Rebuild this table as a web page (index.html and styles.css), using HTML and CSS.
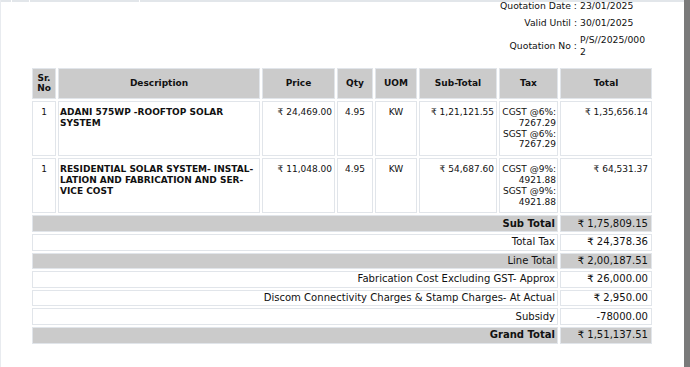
FILE: index.html
```html
<!DOCTYPE html>
<html lang="en">
<head>
<meta charset="utf-8">
<title>Quotation</title>
<link rel="stylesheet" href="styles.css">
</head>
<body>
<div class="page">
  <div class="main">
    <div class="strip"><span></span><span></span><span></span><span></span></div>
    <div class="meta">
      <div class="meta-label">Quotation Date :</div><div class="meta-value">23/01/2025</div>
      <div class="meta-label">Valid Until :</div><div class="meta-value">30/01/2025</div>
      <div class="meta-label">Quotation No :</div><div class="meta-value">P/S//2025/0002</div>
    </div>
    <table class="items">
      <colgroup>
        <col class="c-sr"><col class="c-desc"><col class="c-price"><col class="c-qty"><col class="c-uom"><col class="c-sub"><col class="c-tax"><col class="c-total">
      </colgroup>
      <thead>
        <tr>
          <th>Sr.<br>No</th><th>Description</th><th>Price</th><th>Qty</th><th>UOM</th><th>Sub-Total</th><th>Tax</th><th>Total</th>
        </tr>
      </thead>
      <tbody>
        <tr class="item">
          <td class="center">1</td>
          <td class="desc">ADANI 575WP -ROOFTOP SOLAR SYSTEM</td>
          <td class="num">₹ 24,469.00</td>
          <td class="center">4.95</td>
          <td class="center">KW</td>
          <td class="num">₹ 1,21,121.55</td>
          <td class="tax">CGST @6%:<br>7267.29<br>SGST @6%:<br>7267.29</td>
          <td class="num last">₹ 1,35,656.14</td>
        </tr>
        <tr class="item">
          <td class="center">1</td>
          <td class="desc">RESIDENTIAL SOLAR SYSTEM- INSTAL&shy;LATION AND FABRICATION AND SER&shy;VICE COST</td>
          <td class="num">₹ 11,048.00</td>
          <td class="center">4.95</td>
          <td class="center">KW</td>
          <td class="num">₹ 54,687.60</td>
          <td class="tax">CGST @9%:<br>4921.88<br>SGST @9%:<br>4921.88</td>
          <td class="num last">₹ 64,531.37</td>
        </tr>
        <tr class="sum shaded">
          <td colspan="7" class="bold">Sub Total</td><td class="last">₹ 1,75,809.15</td>
        </tr>
        <tr class="sum">
          <td colspan="7">Total Tax</td><td class="last">₹ 24,378.36</td>
        </tr>
        <tr class="sum shaded">
          <td colspan="7">Line Total</td><td class="last">₹ 2,00,187.51</td>
        </tr>
        <tr class="sum">
          <td colspan="7">Fabrication Cost Excluding GST- Approx</td><td class="last">₹ 26,000.00</td>
        </tr>
        <tr class="sum">
          <td colspan="7">Discom Connectivity Charges &amp; Stamp Charges- At Actual</td><td class="last">₹ 2,950.00</td>
        </tr>
        <tr class="sum">
          <td colspan="7">Subsidy</td><td class="last">-78000.00</td>
        </tr>
        <tr class="sum shaded">
          <td colspan="7" class="bold">Grand Total</td><td class="last">₹ 1,51,137.51</td>
        </tr>
      </tbody>
    </table>
  </div>
  <div class="scrollbar"></div>
</div>
</body>
</html>
```

FILE: styles.css
```css
* { box-sizing: border-box; }

html, body {
  margin: 0;
  padding: 0;
  background: #ffffff;
}

body {
  font-family: "DejaVu Sans", Verdana, sans-serif;
  font-size: 9.25px;
  color: #111111;
}

.page {
  display: flex;
  width: 690px;
  height: 367px;
  overflow: hidden;
}

.main {
  flex: 1;
  border-left: 1px solid #e8ebef;
  min-width: 0;
}

.scrollbar {
  width: 6px;
  background: #7a7a7a;
}

.strip {
  display: grid;
  grid-template-columns: 10px 17px 109px 1fr;
  column-gap: 1px;
  height: 2px;
}

.strip span {
  background: #e2e6ea;
}

.meta {
  display: grid;
  grid-template-columns: auto 67px;
  column-gap: 3px;
  row-gap: 5px;
  justify-content: end;
  padding-right: 37px;
  margin-top: -2px;
  line-height: 12px;
}

.meta-label {
  text-align: right;
  align-self: center;
  white-space: nowrap;
}

.meta-value {
  word-break: break-all;
}

.items {
  margin-top: 8px;
  margin-left: 29px;
  border-collapse: separate;
  border-spacing: 2px;
  table-layout: fixed;
  width: 624px;
  font-size: 9px;
  line-height: 10.8px;
}

.c-sr { width: 24px; }
.c-desc { width: 202px; }
.c-price { width: 73px; }
.c-qty { width: 36px; }
.c-uom { width: 42px; }
.c-sub { width: 78px; }
.c-tax { width: 59px; }
.c-total { width: 92px; }

.items th,
.items td {
  border: 1px solid #e1e5ea;
}

.items th {
  background: #cbcbcb;
  font-weight: bold;
  text-align: center;
  vertical-align: middle;
  padding: 3.7px 1px;
}

.item td {
  vertical-align: top;
  padding: 5px 2px;
}

.center { text-align: center; }

.desc {
  font-weight: bold;
  text-align: left;
}

.item .desc {
  padding-left: 1px;
  padding-right: 1px;
}

.num { text-align: right; }

.item .tax {
  text-align: right;
  padding-left: 0;
  padding-right: 1px;
  white-space: nowrap;
}

.items .last {
  padding-right: 3px;
}

.sum td {
  font-size: 10.05px;
  line-height: 12px;
  text-align: right;
  padding-top: 1.3px;
  padding-bottom: 1.3px;
  padding-left: 2px;
  padding-right: 2px;
}

.sum.shaded td {
  background: #cbcbcb;
}

.bold { font-weight: bold; }
```
